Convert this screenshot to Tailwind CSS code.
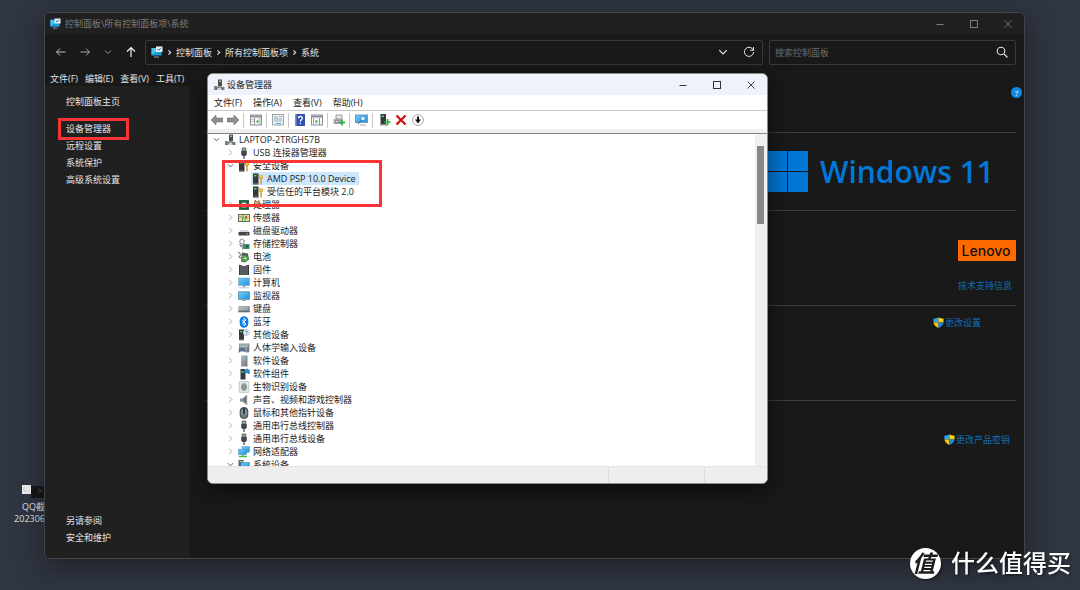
<!DOCTYPE html>
<html lang="zh-CN">
<head>
<meta charset="utf-8">
<title>系统</title>
<script src="https://cdn.jsdelivr.net/npm/@tailwindcss/browser@4"></script>
</head>
<body class="relative h-screen overflow-hidden bg-[#2f3541] font-['Open_Sans','Noto_Sans_CJK_SC',sans-serif] text-[9px] leading-[13px]">

<svg class="absolute size-0" aria-hidden="true">
  <defs>
    <linearGradient id="blue" x1="0" y1="0" x2="1" y2="1"><stop offset="0" stop-color="#6fcbfb"/><stop offset="1" stop-color="#2492de"/></linearGradient>
    <linearGradient id="grey" x1="0" y1="0" x2="1" y2="1"><stop offset="0" stop-color="#b4bac0"/><stop offset="1" stop-color="#6d757c"/></linearGradient>
  </defs>
  <symbol id="i-panel" viewBox="0 0 12 12"><rect x="0.5" y="2" width="10" height="7.5" rx="0.5" fill="#1b9ad8"/><path d="M.5 2h10L.5 9z" fill="#43c3ee"/><path d="M3 11h5" stroke="#8ba3b5"/><rect x="5" y="0.5" width="6.5" height="5.5" fill="#e9f3fa"/><path d="M6.5 3l1.2 1.4L10 1.8" fill="none" stroke="#1767a8"/></symbol>
  <symbol id="i-root" viewBox="0 0 12 12"><rect x="5" y="0.5" width="4" height="7" fill="#4b4f52"/><rect x="6" y="1.5" width="2" height="1.5" fill="#7dcb78"/><path d="M1 7h10v4H1z" fill="#d3d6d8"/><path d="M1 7h3v4H1zM8.500 8h3v3h-3z" fill="#808589"/><path d="M3 11l2-3h3l2 3" fill="none" stroke="#5a5e61"/></symbol>
  <symbol id="i-usb" viewBox="0 0 12 12"><path d="M4.200 1h3.600v3H4.200z" fill="#a9adb0" stroke="#44484b" stroke-width=".8"/><path d="M3.200 4h5.600v3.500L7.500 9h-3L3.200 7.500z" fill="#44484b"/><path d="M6 9v3" stroke="#44484b" stroke-width="1.200"/></symbol>
  <symbol id="i-sec" viewBox="0 0 12 12"><rect x="1" y="0.500" width="5.500" height="11" fill="#35393b"/><rect x="2" y="2" width="2.500" height="1.500" fill="#57d35b"/><path d="M1 11h5.500" stroke="#85898c"/><circle cx="9" cy="4" r="2.300" fill="#e5a92f"/><circle cx="9" cy="3.200" r=".7" fill="#fff"/><path d="M8.300 6h1.500v5l-.8.8-.7-.8z" fill="#d59a2a"/></symbol>
  <symbol id="i-cpu" viewBox="0 0 12 12"><rect x="1" y="1" width="10" height="10" fill="#2f6b4c"/><rect x="3" y="3" width="6" height="6" fill="#cfd6d2" stroke="#174a30"/></symbol>
  <symbol id="i-sensor" viewBox="0 0 12 12"><rect x=".5" y="2.500" width="11" height="7" fill="#e9dc8f" stroke="#5f7152"/><path d="M1.500 5h3v4M5 3v3h5M7 6v3" fill="none" stroke="#69a16a"/><path d="M7 4h2v2H7z" fill="#c8533d"/></symbol>
  <symbol id="i-disk" viewBox="0 0 12 12"><path d="M2.500 5h7l2 2.500H.5z" fill="#d4d7d9"/><rect x=".5" y="7" width="11" height="3.500" rx=".5" fill="#44484b"/><path d="M8 8.800h2" stroke="#6ec66c"/></symbol>
  <symbol id="i-store" viewBox="0 0 12 12"><circle cx="4" cy="3.500" r="2.200" fill="none" stroke="#777c80" stroke-width="1.300" stroke-dasharray="1.300 .5"/><path d="M1 5.500l4 2.500L3 9.500z" fill="#777c80"/><path d="M5 6h6.500v5H5z" fill="#3b9359"/><path d="M8 7.500h2.500v2H8z" fill="#294d65"/><path d="M4.500 5v7" stroke="#aab0b4"/></symbol>
  <symbol id="i-batt" viewBox="0 0 12 12"><path d="M4 1.500l6 1 1 6-4 3-4-1z" fill="#4f5d52"/><circle cx="6.800" cy="7.500" r="3" fill="#55a94a"/><path d="M5.500 8l2-2 1 2z" fill="#eef6ea"/><path d="M0 1l3 2.500L1 6l4 2" fill="none" stroke="#7c8184" stroke-width="1.200"/></symbol>
  <symbol id="i-firm" viewBox="0 0 12 12"><path d="M1.500 1h2l1 1h3l1-1h2v10h-9z" fill="#565b5f"/><path d="M1.500 1v10M10.500 1v10" stroke="#35393b"/></symbol>
  <symbol id="i-pc" viewBox="0 0 12 12"><rect x=".5" y="1" width="11" height="7.500" fill="url(#blue)" stroke="#75a9c8" stroke-width=".6"/><path d="M5 8.500h2v1.500H5z" fill="#879197"/><path d="M1 10.800h10" stroke="#b9c2c9"/></symbol>
  <symbol id="i-mon" viewBox="0 0 12 12"><rect x=".5" y="1.800" width="11" height="7.500" fill="url(#blue)" stroke="#547b94" stroke-width=".7"/><path d="M4 10.500h4" stroke="#a2adb5"/></symbol>
  <symbol id="i-key" viewBox="0 0 12 12"><rect x=".3" y="3" width="11.400" height="6" rx=".6" fill="url(#grey)"/><path d="M1.500 4.700h9M1.500 6.300h9" stroke="#e2e5e7" stroke-width=".6" stroke-dasharray="1 .5"/><path d="M.3 8.800h11.400" stroke="#5b6064"/></symbol>
  <symbol id="i-bt" viewBox="0 0 12 12"><rect x="1.700" y=".2" width="8.600" height="11.600" rx="4.300" fill="#0b7de8"/><path d="M3.800 4l4.200 4-2 1.800V2.200L8 4 3.800 8" fill="none" stroke="#fff" stroke-width=".9"/></symbol>
  <symbol id="i-other" viewBox="0 0 12 12"><rect x="1" y=".5" width="5" height="10.500" fill="#35393b"/><rect x="2" y="2" width="2" height="1.200" fill="#57d35b"/><path d="M1 11h5" stroke="#898e91"/><circle cx="8.300" cy="3.600" r="3.100" fill="#e2ebf1" stroke="#a1adb5" stroke-width=".5"/><path d="M7.200 3c0-1.600 2.300-1.400 2.200 0 0 .8-1 .8-1 1.700M8.400 5.200v.7" fill="none" stroke="#367eb0" stroke-width=".8"/></symbol>
  <symbol id="i-hid" viewBox="0 0 12 12"><rect x="1" y="1.500" width="10.500" height="4.500" fill="#8d969d"/><path d="M2 3h8M2 4.500h8" stroke="#dbe0e3" stroke-width=".5"/><path d="M1 6h6.500l1 5-2-1.500h-4L.5 11z" fill="#5b748a"/><rect x="8.300" y="5" width="3" height="5.500" rx="1.500" fill="#737b81"/></symbol>
  <symbol id="i-soft" viewBox="0 0 12 12"><rect x="3" y=".5" width="6.500" height="11" fill="url(#grey)"/><rect x="5.300" y="2.500" width="1.800" height="2" fill="#62c4e8"/></symbol>
  <symbol id="i-comp" viewBox="0 0 12 12"><rect x="2.500" y="1" width="5" height="10.500" fill="#35393b"/><rect x="3.500" y="3" width="2" height="1.500" fill="#57d35b"/><path d="M6.500 1.500h1.700a1 1 0 012 0h1.500v4.500H10a1 1 0 00-2 0H6.500z" fill="#318ace"/></symbol>
  <symbol id="i-bio" viewBox="0 0 12 12"><rect x="1.200" y=".7" width="9.600" height="10.600" fill="#e6ecea" stroke="#b3c4be" stroke-width=".8"/><ellipse cx="6" cy="6" rx="3" ry="4" fill="#a5aaab"/><path d="M4 8V5q2-3 4 0v3M6 4.500v5" fill="none" stroke="#6f7576" stroke-width=".7"/></symbol>
  <symbol id="i-snd" viewBox="0 0 12 12"><path d="M2 4.500h2.500L9 .7v10.600L4.500 7.700H2z" fill="#8e9498"/><path d="M5 4.500L9 .7v10.600L7 9z" fill="#6c7276"/><path d="M9 1v10" stroke="#c6cacc"/></symbol>
  <symbol id="i-mouse" viewBox="0 0 12 12"><rect x="2.200" y=".5" width="7.600" height="11" rx="3.500" fill="#6e777e" stroke="#3f4549"/><path d="M6 1v6" stroke="#262a2d" stroke-width="1.500"/><path d="M4 3v5M8 3v5" stroke="#a7bdcb" stroke-width=".7"/></symbol>
  <symbol id="i-net" viewBox="0 0 12 12"><rect x="4" y=".7" width="7.500" height="5.500" fill="url(#blue)" stroke="#4590bd" stroke-width=".5"/><rect x=".5" y="3.200" width="8" height="5.500" fill="url(#blue)" stroke="#4590bd" stroke-width=".5"/><path d="M1 10.500h8" stroke="#4dbb4d" stroke-width="1.500"/><path d="M5 8.500v2" stroke="#4dbb4d" stroke-width="1.500"/></symbol>
  <symbol id="i-sys" viewBox="0 0 12 12"><path d="M.5 1h5v10h-5z" fill="#566069"/><rect x="3" y="3.500" width="8.500" height="6" fill="url(#blue)" stroke="#3a86b6" stroke-width=".6"/><path d="M1.500 2.500h3" stroke="#9fe29f"/></symbol>
  <symbol id="i-shield" viewBox="0 0 12 12"><path d="M6 .3C4.500 1.400 2.500 1.800.5 1.800V6H6z" fill="#2da7ea"/><path d="M6 .3c1.500 1.100 3.500 1.500 5.500 1.500V6H6z" fill="#ffd40f"/><path d="M.5 6c.3 3 2.500 4.800 5.500 5.900V6z" fill="#fdc50b"/><path d="M11.500 6c-.3 3-2.500 4.800-5.500 5.900V6z" fill="#1b8ad8"/></symbol>
  <symbol id="i-down" viewBox="0 0 8 8"><path d="M1 2.500l3 3 3-3" fill="none" stroke="currentColor" stroke-width="1"/></symbol>
  <symbol id="i-right" viewBox="0 0 8 8"><path d="M2.500 1l3 3-3 3" fill="none" stroke="currentColor" stroke-width="1"/></symbol>
  <symbol id="i-crumb" viewBox="0 0 8 8"><path d="M2.800 1.500L5.300 4 2.800 6.500" fill="none" stroke="currentColor" stroke-width="1.300"/></symbol>
  <symbol id="i-min" viewBox="0 0 8 8"><path d="M.5 4.500h7" stroke="currentColor"/></symbol>
  <symbol id="i-max" viewBox="0 0 8 8"><rect x=".5" y=".5" width="7" height="7" fill="none" stroke="currentColor"/></symbol>
  <symbol id="i-close" viewBox="0 0 8 8"><path d="M.5.5l7 7M7.500.5l-7 7" stroke="currentColor" stroke-width=".9"/></symbol>
</svg>

<!-- Desktop shortcut -->
<div class="absolute left-[13px] top-[485px] flex w-8 flex-col items-end text-[#dfe1e5]">
  <svg class="h-[14px] w-[23px]" viewBox="0 0 23 14"><path d="M9 1h14v12H9z" fill="#17181a"/><path d="M0 0h9v9H0z" fill="#f1eff0"/><path d="M2 2v4h3" fill="none" stroke="#c9c4c4"/><path d="M16 4l4 2-4 1" fill="none" stroke="#45464a"/></svg>
  <div class="flex flex-col items-end pt-0.5 leading-3"><span>QQ截</span><span>202306</span></div>
</div>

<!-- Control panel window -->
<div class="absolute bottom-[31px] left-[44px] right-[55px] top-3 flex flex-col overflow-hidden rounded-md border border-[#434549] bg-[#191919] text-[#e4e4e4] shadow-[0_8px_28px_rgba(0,0,0,0.4)]">
  <header class="flex h-[21px] shrink-0 items-center bg-[#202020] pl-[5px] pr-3 text-[#7c7c7c]">
    <svg class="mr-1 size-[11px]"><use href="#i-panel"/></svg>
    <h1 class="flex-1">控制面板\所有控制面板项\系统</h1>
    <div class="flex gap-[26px]">
      <button aria-label="最小化"><svg class="size-2"><use href="#i-min"/></svg></button>
      <button aria-label="最大化"><svg class="size-2"><use href="#i-max"/></svg></button>
      <button aria-label="关闭"><svg class="size-2"><use href="#i-close"/></svg></button>
    </div>
  </header>
  <div class="flex h-9 shrink-0 items-center pl-[10px] pr-2">
    <nav class="flex w-[90px] items-center gap-3">
      <button aria-label="后退"><svg class="size-3" viewBox="0 0 12 12" fill="none" stroke="#bdbdbd"><path d="M10.500 6h-9M5 2.500L1.500 6 5 9.500"/></svg></button>
      <button aria-label="前进"><svg class="size-3" viewBox="0 0 12 12" fill="none" stroke="#a5a5a5"><path d="M1.500 6h9M7 2.500L10.500 6 7 9.500"/></svg></button>
      <button class="px-px text-[#9a9a9a]" aria-label="最近位置"><svg class="size-2"><use href="#i-down"/></svg></button>
      <button aria-label="上移"><svg class="size-3" viewBox="0 0 12 12" fill="none" stroke="#f0f0f0" stroke-width="1.200"><path d="M6 11V1.500M2 5.500l4-4 4 4"/></svg></button>
    </nav>
    <div class="flex h-[25px] flex-1 items-center rounded-xs border border-[#383838] pl-[5px] pr-[7px]">
      <svg class="mr-[3px] size-3"><use href="#i-panel"/></svg>
      <div class="flex flex-1 items-center gap-[3px]">
        <svg class="size-[7px]"><use href="#i-crumb"/></svg><a href="#">控制面板</a>
        <svg class="size-[7px]"><use href="#i-crumb"/></svg><a href="#">所有控制面板项</a>
        <svg class="size-[7px]"><use href="#i-crumb"/></svg><a href="#">系统</a>
      </div>
      <button class="mr-[15px]" aria-label="展开"><svg class="size-[10px]"><use href="#i-down"/></svg></button>
      <button aria-label="刷新"><svg class="size-3" viewBox="0 0 12 12" fill="none" stroke="#e4e4e4"><path d="M10.300 4.200A4.600 4.600 0 1 0 10.600 6M10.500 1v3.300H7.200"/></svg></button>
    </div>
    <div class="ml-[6px] flex h-[25px] w-[247px] items-center rounded-xs border border-[#383838] pl-[5px] pr-[7px]">
      <input class="min-w-0 flex-1 bg-transparent outline-none placeholder:text-[#6b6b6b]" type="text" aria-label="搜索控制面板" placeholder="搜索控制面板">
      <button aria-label="搜索"><svg class="size-3" viewBox="0 0 12 12" fill="none" stroke="#e4e4e4" stroke-width="1.100"><circle cx="5" cy="5" r="3.800"/><path d="M8 8l3.500 3.500"/></svg></button>
    </div>
  </div>
  <nav class="flex h-4 shrink-0 items-center gap-[7px] pl-[5px]">
    <button>文件(F)</button><button>编辑(E)</button><button>查看(V)</button><button>工具(T)</button>
  </nav>
  <div class="flex min-h-0 flex-1">
    <aside class="flex w-36 shrink-0 flex-col bg-[#202020] pb-3 pl-[21px] pt-[7px] leading-[17px]">
      <a href="#">控制面板主页</a>
      <nav class="flex flex-col items-start pt-[10px]">
        <a href="#" class="relative">设备管理器<span class="absolute -left-2 -top-[2px] h-[22px] w-[71px] border-3 border-[#f83434]"></span></a>
        <a href="#">远程设置</a>
        <a href="#">系统保护</a>
        <a href="#">高级系统设置</a>
      </nav>
      <div class="mt-auto flex flex-col items-start">
        <span>另请参阅</span>
        <a href="#">安全和维护</a>
      </div>
    </aside>
    <main class="relative flex flex-1 flex-col pl-4 pr-2 text-[#0d6fb8]">
      <button aria-label="帮助" class="absolute right-[2px] top-[1px] flex size-[11px] items-center justify-center rounded-full bg-[#0f8ce0] text-[8px] text-white">?</button>
      <div class="h-[47px] border-b border-[#3c3c3c]"></div>
      <div class="flex h-[78px] items-center justify-end gap-3 border-b border-[#3c3c3c] pr-[22px] text-[#0078d7]">
        <svg class="size-[41px]" viewBox="0 0 41 41" fill="#0078d7"><path d="M0 0h20v20H0zM21 0h20v20H21zM0 21h20v20H0zM21 21h20v20H21z"/></svg>
        <span class="text-[30px] font-semibold leading-[41px]">Windows 11</span>
      </div>
      <div class="flex h-[95px] flex-col items-end border-b border-[#3c3c3c] pt-[29px]">
        <span class="flex h-[21px] w-[58px] items-center justify-center bg-[#ff6a00] font-['Inter'] text-[14px] font-medium text-[#111]">Lenovo<span class="self-end text-[6px] leading-[10px] text-white">.</span></span>
        <a href="#" class="mr-1 mt-[18px]">技术支持信息</a>
      </div>
      <div class="flex h-[95px] items-start justify-end border-b border-[#3c3c3c] pr-[35px] pt-[10px]">
        <a href="#" class="flex items-center"><svg class="mr-px size-[11px]"><use href="#i-shield"/></svg>更改设置</a>
      </div>
      <div class="flex items-start justify-end pr-[6px] pt-8">
        <a href="#" class="flex items-center"><svg class="mr-px size-[11px]"><use href="#i-shield"/></svg>更改产品密钥</a>
      </div>
    </main>
  </div>
</div>

<!-- Device manager window -->
<div class="absolute left-[207px] top-[73px] flex h-[411px] w-[561px] flex-col overflow-hidden rounded-md border border-[#8a8a8a] bg-white text-[#1b1b1b] shadow-[0_6px_24px_rgba(0,0,0,0.55)]">
  <header class="flex h-[21px] shrink-0 items-center bg-[#eff2fa] pl-[5px] pr-3">
    <svg class="mr-[2px] size-3"><use href="#i-root"/></svg>
    <h2 class="flex-1">设备管理器</h2>
    <div class="flex gap-[26px] text-[#333]">
      <button aria-label="最小化"><svg class="size-2"><use href="#i-min"/></svg></button>
      <button aria-label="最大化"><svg class="size-2"><use href="#i-max"/></svg></button>
      <button aria-label="关闭"><svg class="size-2"><use href="#i-close"/></svg></button>
    </div>
  </header>
  <nav class="flex h-4 shrink-0 items-center gap-[11px] border-b border-[#c9c9c9] pl-[6px]">
    <button>文件(F)</button><button>操作(A)</button><button>查看(V)</button><button>帮助(H)</button>
  </nav>
  <div class="flex h-[18px] shrink-0 items-center pl-[3px]">
    <button aria-label="后退"><svg class="size-3" viewBox="0 0 12 12"><path d="M0 6l5-5v3h7v4H5v3z" fill="#8f8f8f" stroke="#6f6f6f" stroke-width=".6"/></svg></button>
    <button class="ml-1" aria-label="前进"><svg class="size-3" viewBox="0 0 12 12"><path d="M12 6L7 1v3H0v4h7v3z" fill="#8f8f8f" stroke="#6f6f6f" stroke-width=".6"/></svg></button>
    <span class="ml-1 mr-[6px] h-[15px] w-px bg-[#c8c8c8]"></span>
    <button aria-label="显示控制台树"><svg class="size-3" viewBox="0 0 12 12"><rect x=".5" y="1" width="11" height="10" fill="#f4f6f7" stroke="#8b949b"/><path d="M0 2.500h12" stroke="#8b949b" stroke-width="2"/><path d="M4.500 4v7" stroke="#8b949b"/><path d="M8.500 5.500v4L6 7.500z" fill="#3fae49"/><path d="M1.500 5.500h2M1.500 7.500h2M10 4v7" stroke="#a9b2b8"/></svg></button>
    <span class="ml-1 mr-[5px] h-[15px] w-px bg-[#c8c8c8]"></span>
    <button aria-label="属性"><svg class="size-3" viewBox="0 0 12 12"><rect x=".5" y=".5" width="11" height="10.500" fill="#eef1f3" stroke="#9ca4aa"/><path d="M2 3h4M2 5h8M2 7h8M7 2.500h3" stroke="#9aafbd"/><path d="M4 9.500h5" stroke="#67a9ce"/></svg></button>
    <span class="ml-1 mr-[5px] h-[15px] w-px bg-[#c8c8c8]"></span>
    <button aria-label="帮助"><svg class="size-3" viewBox="0 0 12 12"><rect x="1" y="0" width="10" height="12" fill="#3350b5"/><path d="M1 0h1.500v12H1z" fill="#7b90da"/><path d="M4.500 4.300c0-2.600 4-2.300 3.800 0C8.200 5.800 6.400 5.600 6.400 7.500M6.400 8.700v1.300" fill="none" stroke="#fff" stroke-width="1.300"/></svg></button>
    <button class="ml-[5px]" aria-label="操作窗格"><svg class="size-3" viewBox="0 0 12 12"><rect x=".5" y="1" width="11" height="10" fill="#f4f6f7" stroke="#8b949b"/><path d="M0 2.500h12" stroke="#8b949b" stroke-width="2"/><path d="M8.500 4v7" stroke="#8b949b"/><path d="M4.500 5.500v4L7 7.500z" fill="#3fae49"/><path d="M2.500 4v7" stroke="#a9b2b8"/></svg></button>
    <span class="ml-1 mr-[5px] h-[15px] w-px bg-[#c8c8c8]"></span>
    <button aria-label="扫描"><svg class="size-3" viewBox="0 0 12 12"><path d="M3 1h6v4H3z" fill="#e8eaeb" stroke="#999ea2"/><path d="M.5 5h9v5h-9z" fill="#a8adb1"/><circle cx="4" cy="7.500" r="1.500" fill="#ececec" stroke="#777"/><path d="M9 5.500v6M6 8.500h6" stroke="#35b34a" stroke-width="1.800"/></svg></button>
    <span class="ml-1 mr-[5px] h-[15px] w-px bg-[#c8c8c8]"></span>
    <button aria-label="扫描检测硬件改动"><svg class="h-3 w-[13px]" viewBox="0 0 13 12"><rect x=".5" y="1" width="12" height="7.500" fill="url(#blue)" stroke="#5f9fc6"/><circle cx="8" cy="4.500" r="2.300" fill="#d8effc" stroke="#3577a8" stroke-width=".7"/><path d="M6.500 6L3 10" stroke="#4e5e69"/><path d="M5 11h6" stroke="#9cabb5"/></svg></button>
    <span class="ml-1 mr-[6px] h-[15px] w-px bg-[#c8c8c8]"></span>
    <button aria-label="添加驱动"><svg class="size-3" viewBox="0 0 12 12"><rect x="1.500" y="0" width="5.500" height="10.500" fill="#35393b"/><rect x="2.500" y="1.500" width="2.500" height="1.500" fill="#57d35b"/><path d="M1 11h7" stroke="#85898c"/><path d="M8.500 5v6.500M5.500 8.200h6" stroke="#35b34a" stroke-width="1.800"/></svg></button>
    <button class="ml-1" aria-label="卸载设备"><svg class="size-3" viewBox="0 0 12 12"><path d="M1.500 1.500l9 9M10.500 1.500l-9 9" stroke="#d40d12" stroke-width="2.300"/></svg></button>
    <button class="ml-[5px]" aria-label="禁用设备"><svg class="size-3" viewBox="0 0 12 12"><circle cx="6" cy="6" r="5.500" fill="#fafafa" stroke="#9b9b9b" stroke-width=".8"/><path d="M6 2.500v4" stroke="#111" stroke-width="2"/><path d="M3 5.500h6L6 9.500z" fill="#111"/></svg></button>
  </div>
  <div class="h-1 shrink-0 bg-[#f0f0f0]"></div>
  <div class="relative flex min-h-0 flex-1 border-t border-[#828282]">
    <ul id="tree" role="tree" aria-label="设备" class="-mt-px flex-1 overflow-hidden pl-px"></ul>
    <div class="w-3 bg-[#f0f0f0] px-[2px] pt-3"><div class="h-[78px] w-[7px] bg-[#878787]"></div></div>
    <span class="pointer-events-none absolute left-[14px] top-[26px] h-[47px] w-[160px] border-3 border-[#f83434]"></span>
  </div>
  <footer class="flex h-[17px] shrink-0 border-t border-[#e4e4e4] bg-[#eeeeee]">
    <span class="flex-1 border-r border-[#dedede]"></span>
    <span class="w-24 border-r border-[#dedede]"></span>
    <span class="w-[62px]"></span>
  </footer>
</div>

<!-- Watermark -->
<div class="absolute bottom-[11px] right-[9px] flex items-center gap-[10px] text-white drop-shadow-[1px_1px_1px_rgba(0,0,0,0.6)]">
  <span class="flex size-[31px] items-center justify-center rounded-full bg-white pr-1 text-[23px] font-bold italic leading-8 text-[#1b1b1b]">值</span>
  <span class="text-[24px] font-medium leading-8">什么值得买</span>
</div>

<script>
  // [level, state, icon, label]; state: o = expanded, c = collapsed, l = leaf, s = selected leaf
  const rows = [
    [0,'o','root','LAPTOP-2TRGH57B'],[1,'c','usb','USB 连接器管理器'],[1,'o','sec','安全设备'],
    [2,'s','sec','AMD PSP 10.0 Device'],[2,'l','sec','受信任的平台模块 2.0'],[1,'c','cpu','处理器'],
    [1,'c','sensor','传感器'],[1,'c','disk','磁盘驱动器'],[1,'c','store','存储控制器'],[1,'c','batt','电池'],
    [1,'c','firm','固件'],[1,'c','pc','计算机'],[1,'c','mon','监视器'],[1,'c','key','键盘'],[1,'c','bt','蓝牙'],
    [1,'c','other','其他设备'],[1,'c','hid','人体学输入设备'],[1,'c','soft','软件设备'],[1,'c','comp','软件组件'],
    [1,'c','bio','生物识别设备'],[1,'c','snd','声音、视频和游戏控制器'],[1,'c','mouse','鼠标和其他指针设备'],
    [1,'c','usb','通用串行总线控制器'],[1,'c','usb','通用串行总线设备'],[1,'c','net','网络适配器'],[1,'o','sys','系统设备']
  ];
  const indent = ['pl-0', 'pl-[14px]', 'pl-[28px]'];
  const chevron = {
    o: '<button aria-label="折叠" class="flex w-[14px] justify-center text-[#444]"><svg class="size-[7px]"><use href="#i-down"/></svg></button>',
    c: '<button aria-label="展开" class="flex w-[14px] justify-center text-[#a0a0a0]"><svg class="size-[7px]"><use href="#i-right"/></svg></button>',
    l: '<span class="w-[14px]"></span>'
  };
  document.getElementById('tree').innerHTML = rows.map(([level, state, icon, label]) =>
    `<li role="treeitem" aria-level="${level + 1}" class="flex h-[13px] items-center whitespace-nowrap ${indent[level]}">
      ${chevron[state] || chevron.l}
      <span class="flex items-center ${state === 's' ? 'bg-[#cce8ff]' : ''}"><svg class="ml-px mr-[3px] size-3"><use href="#i-${icon}"/></svg>
      <span class="pr-[3px]">${label}</span></span></li>`).join('');
</script>
</body>
</html>
